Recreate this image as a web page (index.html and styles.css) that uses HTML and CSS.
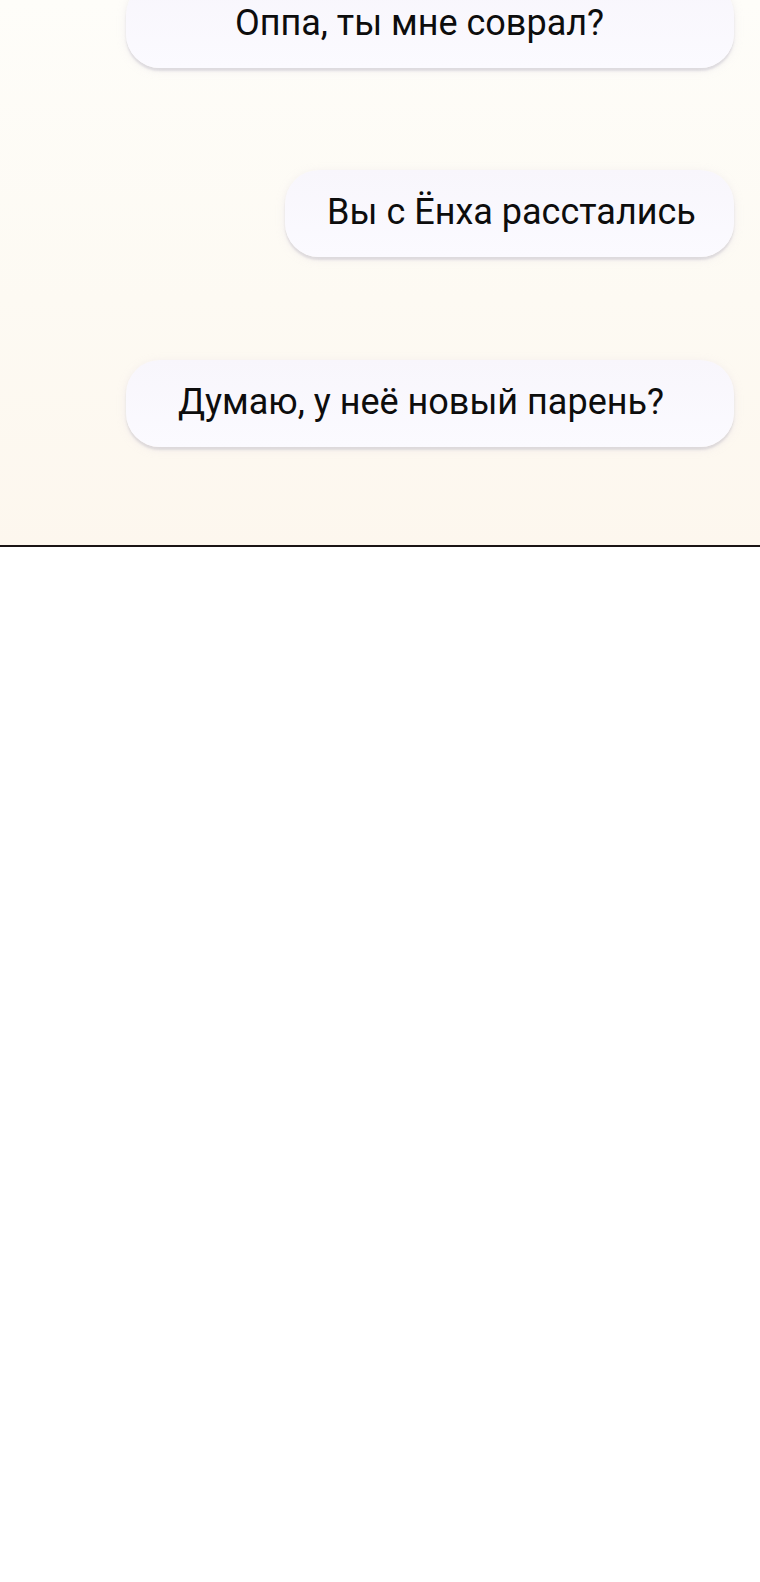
FILE: index.html
```html
<!DOCTYPE html>
<html lang="ru">
<head>
<meta charset="utf-8">
<link rel="stylesheet" href="styles.css">
</head>
<body>
<div class="chat">
  <div class="bubble bubble-wide first"><span class="txt">Оппа, ты мне соврал?</span></div>
  <div class="bubble bubble-narrow"><span class="txt">Вы с Ёнха расстались</span></div>
  <div class="bubble bubble-wide third"><span class="txt">Думаю, у неё новый парень?</span></div>
</div>
<div class="divider"></div>
<div class="blank"></div>
</body>
</html>
```
FILE: styles.css
```css
html, body {
  margin: 0;
  padding: 0;
  background: #ffffff;
}
body {
  width: 760px;
  font-family: Roboto, "Noto Sans", "Liberation Sans", sans-serif;
  overflow: hidden;
}
.chat {
  height: 545px;
  background: linear-gradient(180deg, #fefdf9 0%, #fdfaf3 55%, #fdf7ee 100%);
  display: flex;
  flex-direction: column;
  align-items: flex-end;
  padding-right: 26px;
  box-sizing: border-box;
  overflow: hidden;
}
.bubble {
  height: 87px;
  box-sizing: border-box;
  border-radius: 34px;
  background: linear-gradient(180deg, #f8f6fc 0%, #fbfaff 100%);
  box-shadow: 0 3px 2px rgba(170, 165, 180, 0.3), 0 2px 8px rgba(215, 210, 225, 0.35);
  display: flex;
  align-items: center;
  justify-content: center;
  color: #0d0d0d;
  flex-shrink: 0;
}
.bubble-wide {
  width: 608px;
}
.first {
  margin-top: -19px;
  padding-right: 21px;
}
.bubble-narrow {
  width: 449px;
  margin-top: 102px;
  padding-left: 4px;
}
.third {
  margin-top: 103px;
  padding-right: 18px;
}
.txt {
  font-size: 36px;
  line-height: 42px;
  white-space: nowrap;
  margin-top: -3px;
}
.divider {
  height: 2px;
  background: #1a1414;
}
.blank {
  height: 1035px;
  background: #ffffff;
}
```
